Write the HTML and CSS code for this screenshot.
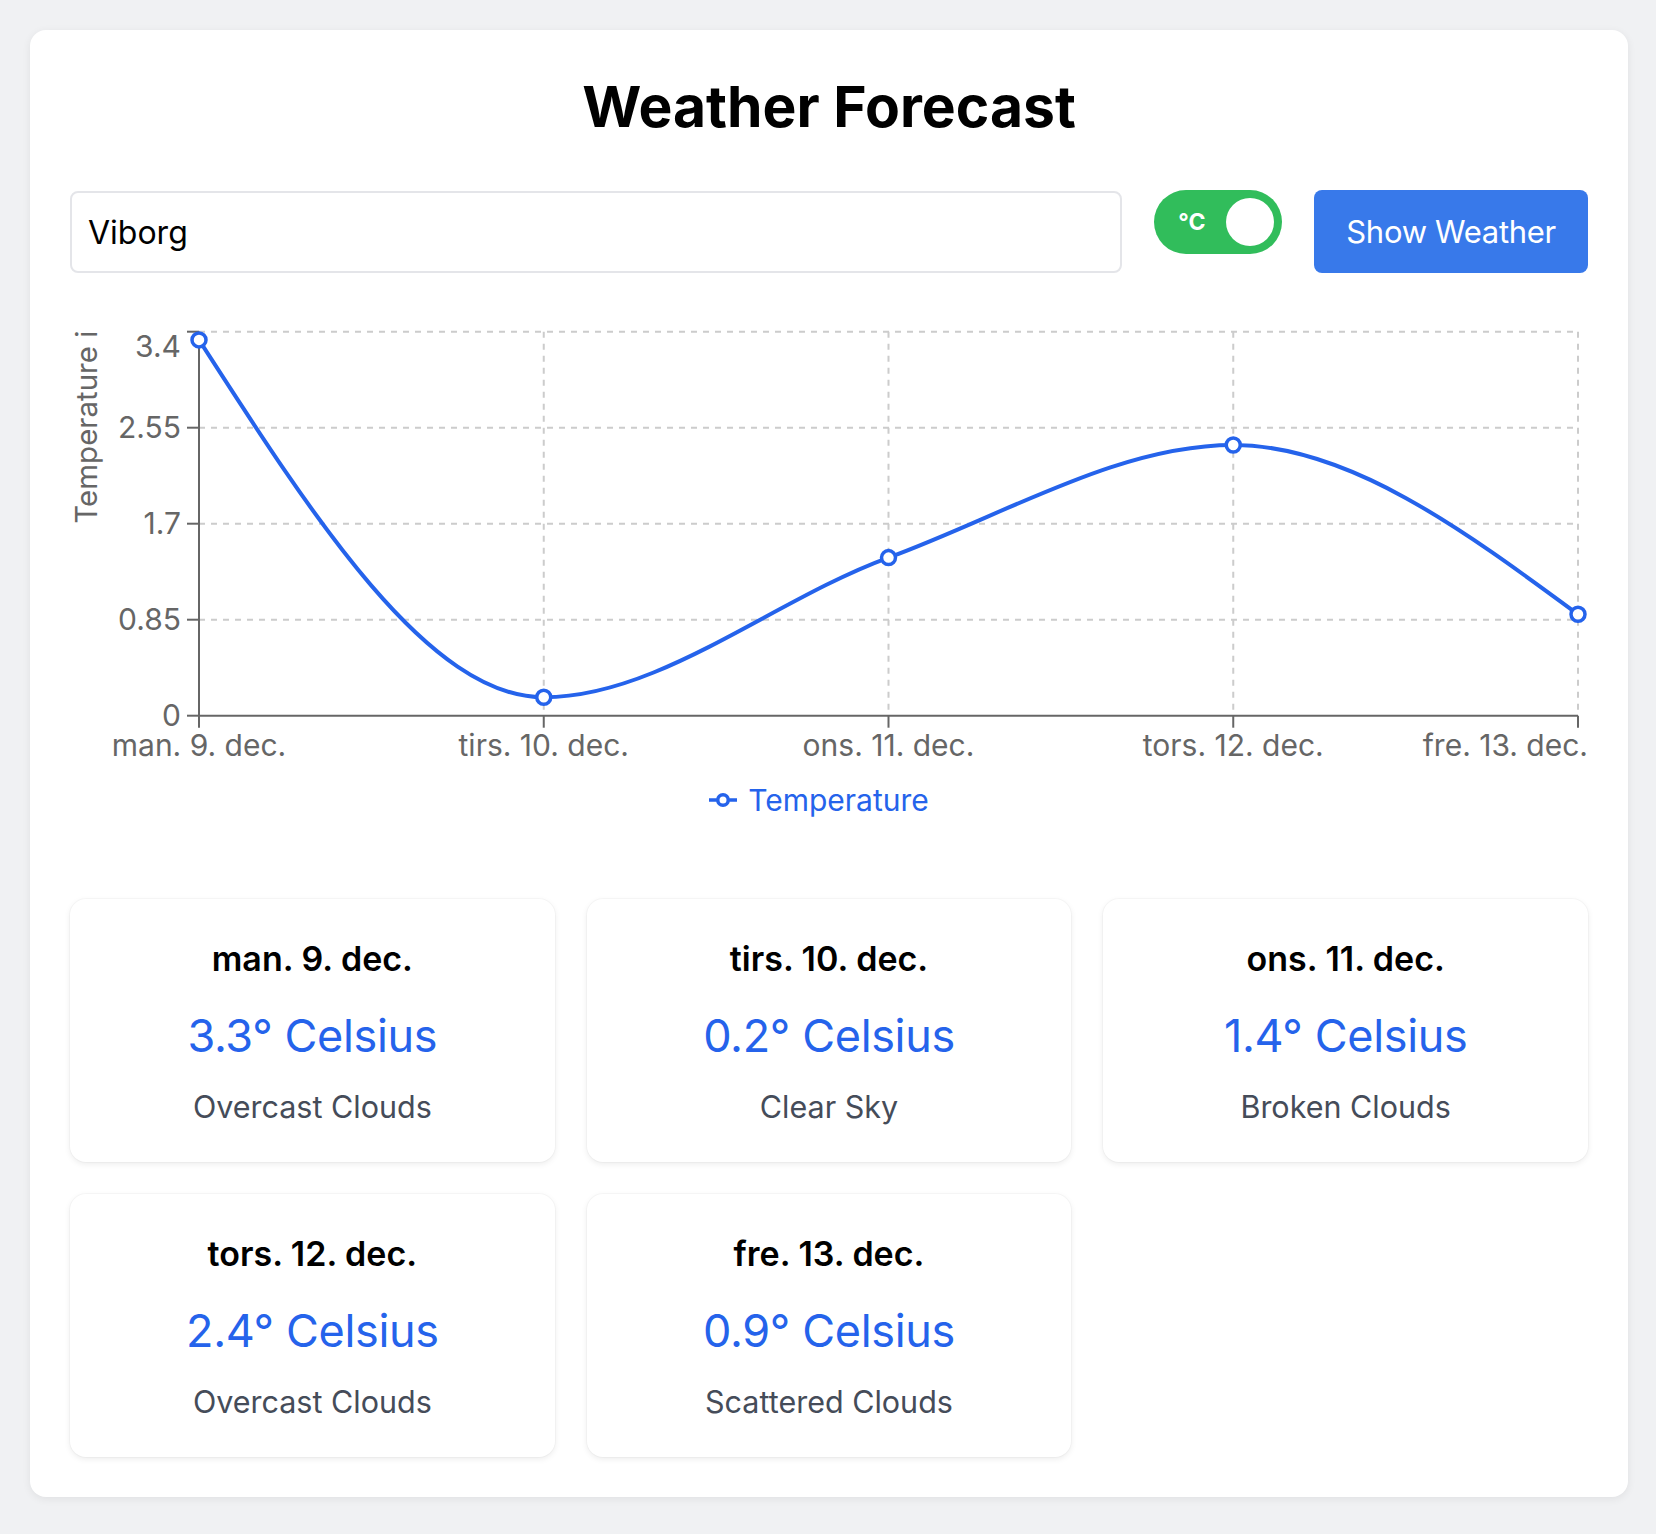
FILE: index.html
```html
<!DOCTYPE html>
<html lang="da">
<head>
<meta charset="utf-8">
<title>Weather Forecast</title>
<link rel="stylesheet" href="styles.css">
</head>
<body>
<main class="panel">
  <h1 class="title">Weather Forecast</h1>
  <div class="controls">
    <input class="city-input" type="text" value="Viborg">
    <div class="toggle"><span class="toggle-label">°C</span><span class="toggle-knob"></span></div>
    <button class="show-btn">Show Weather</button>
  </div>
  <div class="chart">
    <svg class="chart-svg" width="1518" height="458" viewBox="0 0 1518 458">
      <g class="grid">
        <line x1="129" y1="9.7" x2="1508" y2="9.7"/>
        <line x1="129" y1="105.7" x2="1508" y2="105.7"/>
        <line x1="129" y1="201.7" x2="1508" y2="201.7"/>
        <line x1="129" y1="297.7" x2="1508" y2="297.7"/>
        <line x1="473.75" y1="9.7" x2="473.75" y2="393.7"/>
        <line x1="818.5" y1="9.7" x2="818.5" y2="393.7"/>
        <line x1="1163.25" y1="9.7" x2="1163.25" y2="393.7"/>
        <line x1="1508" y1="9.7" x2="1508" y2="393.7"/>
      </g>
      <g class="axis">
        <line x1="129" y1="9.7" x2="129" y2="393.7"/>
        <line x1="129" y1="393.7" x2="1508" y2="393.7"/>
        <line x1="117" y1="9.7" x2="129" y2="9.7"/>
        <line x1="117" y1="105.7" x2="129" y2="105.7"/>
        <line x1="117" y1="201.7" x2="129" y2="201.7"/>
        <line x1="117" y1="297.7" x2="129" y2="297.7"/>
        <line x1="117" y1="393.7" x2="129" y2="393.7"/>
        <line x1="129" y1="393.7" x2="129" y2="405.7"/>
        <line x1="473.75" y1="393.7" x2="473.75" y2="405.7"/>
        <line x1="818.5" y1="393.7" x2="818.5" y2="405.7"/>
        <line x1="1163.25" y1="393.7" x2="1163.25" y2="405.7"/>
        <line x1="1508" y1="393.7" x2="1508" y2="405.7"/>
      </g>
      <g class="ticks-y">
        <text x="111" y="24" dy="0.355em">3.4</text>
        <text x="111" y="105.7" dy="0.355em">2.55</text>
        <text x="111" y="201.7" dy="0.355em">1.7</text>
        <text x="111" y="297.7" dy="0.355em">0.85</text>
        <text x="111" y="393.7" dy="0.355em">0</text>
      </g>
      <g class="ticks-x">
        <text x="129" y="434">man. 9. dec.</text>
        <text x="473.75" y="434">tirs. 10. dec.</text>
        <text x="818.5" y="434">ons. 11. dec.</text>
        <text x="1163.25" y="434">tors. 12. dec.</text>
        <text class="tick-end" x="1518" y="434">fre. 13. dec.</text>
      </g>
      <text class="axis-title" transform="rotate(-90)" x="-201.7" y="27">Temperature i</text>
      <path class="series" d="M129,17.9 C243.92,196.61 358.83,375.3 473.75,375.3 C588.67,375.3 703.58,277.65 818.5,235.6 C933.42,193.55 1048.33,123 1163.25,123 C1278.17,123 1393.08,207.64 1508,292.3"/>
      <g class="dots">
        <circle cx="129" cy="17.9" r="7"/>
        <circle cx="473.75" cy="375.3" r="7"/>
        <circle cx="818.5" cy="235.6" r="7"/>
        <circle cx="1163.25" cy="123" r="7"/>
        <circle cx="1508" cy="292.3" r="7"/>
      </g>
    </svg>
    <div class="legend">
      <svg class="legend-icon" width="28" height="28" viewBox="0 0 32 32"><path d="M0,16h10A6,6,0,1,1,22,16H32M22,16A6,6,0,1,1,10,16"/></svg>
      <span class="legend-text">Temperature</span>
    </div>
  </div>
  <div class="forecast-grid">
    <div class="day-card">
      <div class="day-date">man. 9. dec.</div>
      <div class="day-temp">3.3° Celsius</div>
      <div class="day-desc">Overcast Clouds</div>
    </div>
    <div class="day-card">
      <div class="day-date">tirs. 10. dec.</div>
      <div class="day-temp">0.2° Celsius</div>
      <div class="day-desc">Clear Sky</div>
    </div>
    <div class="day-card">
      <div class="day-date">ons. 11. dec.</div>
      <div class="day-temp">1.4° Celsius</div>
      <div class="day-desc">Broken Clouds</div>
    </div>
    <div class="day-card">
      <div class="day-date">tors. 12. dec.</div>
      <div class="day-temp">2.4° Celsius</div>
      <div class="day-desc">Overcast Clouds</div>
    </div>
    <div class="day-card">
      <div class="day-date">fre. 13. dec.</div>
      <div class="day-temp">0.9° Celsius</div>
      <div class="day-desc">Scattered Clouds</div>
    </div>
  </div>
</main>
</body>
</html>
```
FILE: styles.css
```css
* { box-sizing: border-box; }

html, body { margin: 0; }

body {
  background: #f0f1f3;
  padding: 30px 28px 37px 30px;
  font-family: Inter, "Noto Sans", "Liberation Sans", sans-serif;
  color: #000;
}

.panel {
  background: #fff;
  border-radius: 16px;
  box-shadow: 0 2px 8px rgba(0, 0, 0, 0.07);
  padding: 40px;
}

.title {
  margin: 0 0 46px;
  text-align: center;
  font-size: 57px;
  line-height: 74px;
  font-weight: 700;
  color: #000;
}

.controls {
  display: flex;
  align-items: flex-start;
  gap: 32px;
  height: 83px;
}

.city-input {
  flex: 1;
  height: 82px;
  margin-top: 1px;
  border: 2px solid #e4e5e9;
  border-radius: 8px;
  padding: 0 16px;
  font-family: Inter, "Liberation Sans", sans-serif;
  font-size: 32px;
  color: #000;
  outline: none;
  background: #fff;
}

.toggle {
  width: 128px;
  height: 64px;
  border-radius: 32px;
  background: #31bd5b;
  display: flex;
  align-items: center;
  justify-content: space-between;
  padding: 0 8px 0 24px;
}

.toggle-label {
  color: #fff;
  font-weight: 700;
  font-size: 23px;
  line-height: 1;
}

.toggle-knob {
  width: 48px;
  height: 48px;
  border-radius: 50%;
  background: #fff;
}

.show-btn {
  height: 83px;
  padding: 0 32px;
  border: none;
  border-radius: 8px;
  background: #3879ea;
  color: #fff;
  font-family: Inter, "Liberation Sans", sans-serif;
  font-size: 31px;
  letter-spacing: -0.3px;
  font-weight: 400;
}

.chart {
  margin-top: 49px;
}

.chart-svg {
  display: block;
  overflow: visible;
}

.chart-svg text {
  font-family: Inter, "Liberation Sans", sans-serif;
  font-size: 30px;
  fill: #666;
}

.grid line {
  stroke: #ccc;
  stroke-width: 2;
  stroke-dasharray: 6 6;
}

.axis line {
  stroke: #666;
  stroke-width: 2;
}

.ticks-y text { text-anchor: end; }
.ticks-x text { text-anchor: middle; }
.ticks-x text.tick-end { text-anchor: end; }

.chart-svg .axis-title {
  font-size: 29.5px;
  text-anchor: start;
}

.series {
  fill: none;
  stroke: #2563eb;
  stroke-width: 4;
}

.dots circle {
  fill: #fff;
  stroke: #2563eb;
  stroke-width: 3.5;
}

.legend {
  height: 40px;
  display: flex;
  align-items: center;
  justify-content: center;
  gap: 11px;
  padding-right: 20px;
  color: #2563eb;
  font-size: 30px;
  line-height: 40px;
}

.legend-icon path {
  fill: none;
  stroke: #2563eb;
  stroke-width: 4;
}

.forecast-grid {
  margin-top: 79px;
  display: grid;
  grid-template-columns: repeat(3, 1fr);
  gap: 32px;
}

.day-card {
  background: #fff;
  border-radius: 16px;
  box-shadow: 0 2px 6px rgba(0, 0, 0, 0.08), 0 0 0 1px rgba(0, 0, 0, 0.025);
  padding: 36px 24px 33px;
  text-align: center;
}

.day-date {
  font-size: 34px;
  line-height: 48px;
  font-weight: 600;
  color: #000;
}

.day-temp {
  margin-top: 21px;
  font-size: 45px;
  letter-spacing: -0.35px;
  line-height: 64px;
  color: #2563eb;
}

.day-desc {
  margin-top: 17px;
  font-size: 30.5px;
  line-height: 44px;
  color: #454c59;
}
```
